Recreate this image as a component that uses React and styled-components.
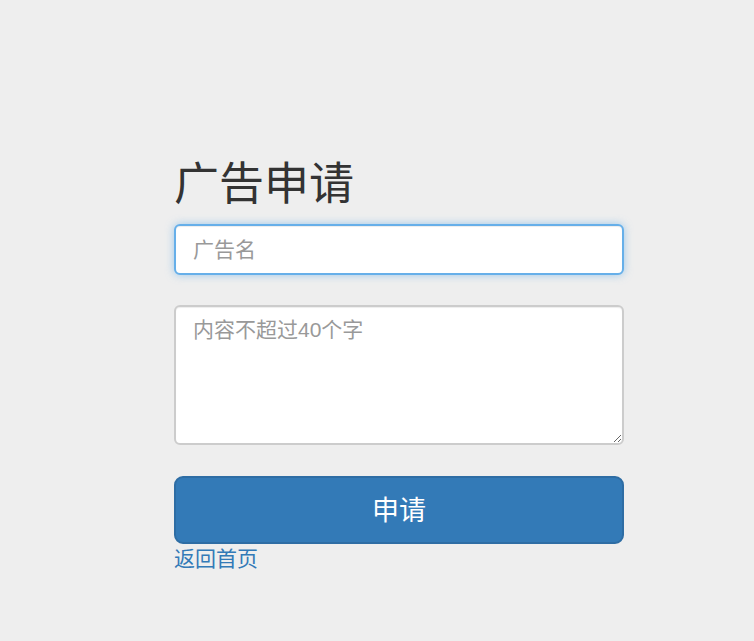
import React from 'react';
import styled, { createGlobalStyle, css } from 'styled-components';

const GlobalStyle = createGlobalStyle`
    html, body {
        margin: 0;
        background: #eee;
        font-family: "Liberation Sans", "Noto Sans CJK SC", sans-serif;
        color: #333;
    }
`;

const Page = styled.div`
    padding: 160px 0 40px 174px;
`;

const Form = styled.form`
    width: 450px;
    display: flex;
    flex-direction: column;
`;

const Heading = styled.h2`
    margin: 0 0 15px;
    font-size: 45px;
    font-weight: 400;
    line-height: 49px;
    color: #333;
`;

const fieldBase = css`
    box-sizing: border-box;
    width: 100%;
    padding: 8px 17px;
    font-size: 21px;
    line-height: 30px;
    font-family: "Liberation Sans", "Noto Sans CJK SC", sans-serif;
    color: #555;
    background: #fff;
    border: 2px solid #ccc;
    border-radius: 6px;
    box-shadow: inset 0 1px 1px rgba(0, 0, 0, 0.075);
    outline: none;

    &::placeholder {
        color: #999;
    }

    ${(p) => p.focused && css`
        border-color: #66afe9;
        box-shadow: inset 0 1px 1px rgba(0, 0, 0, 0.075), 0 0 8px rgba(102, 175, 233, 0.6);
    `}
`;

const Input = styled.input`
    ${fieldBase}
    height: 51px;
    margin-bottom: 30px;
`;

const TextArea = styled.textarea`
    ${fieldBase}
    display: block;
    height: 140px;
    margin-bottom: 31px;
`;

const Button = styled.button`
    box-sizing: border-box;
    width: 100%;
    height: 68px;
    padding: 0 0 4px;
    font-size: 27px;
    font-family: "Liberation Sans", "Noto Sans CJK SC", sans-serif;
    color: #fff;
    background: #337ab7;
    border: 2px solid #2e6da4;
    border-radius: 9px;
    cursor: pointer;
`;

const BackLink = styled.a`
    align-self: flex-start;
    font-size: 21px;
    line-height: 30px;
    color: #337ab7;
    text-decoration: none;
`;

const App = () => (
    <>
        <GlobalStyle />
        <Page>
            <Form onSubmit={(e) => e.preventDefault()}>
                <Heading>广告申请</Heading>
                <Input focused autoFocus placeholder="广告名" />
                <TextArea placeholder="内容不超过40个字" />
                <Button type="submit">申请</Button>
                <BackLink href="#">返回首页</BackLink>
            </Form>
        </Page>
    </>
);

export default App;
